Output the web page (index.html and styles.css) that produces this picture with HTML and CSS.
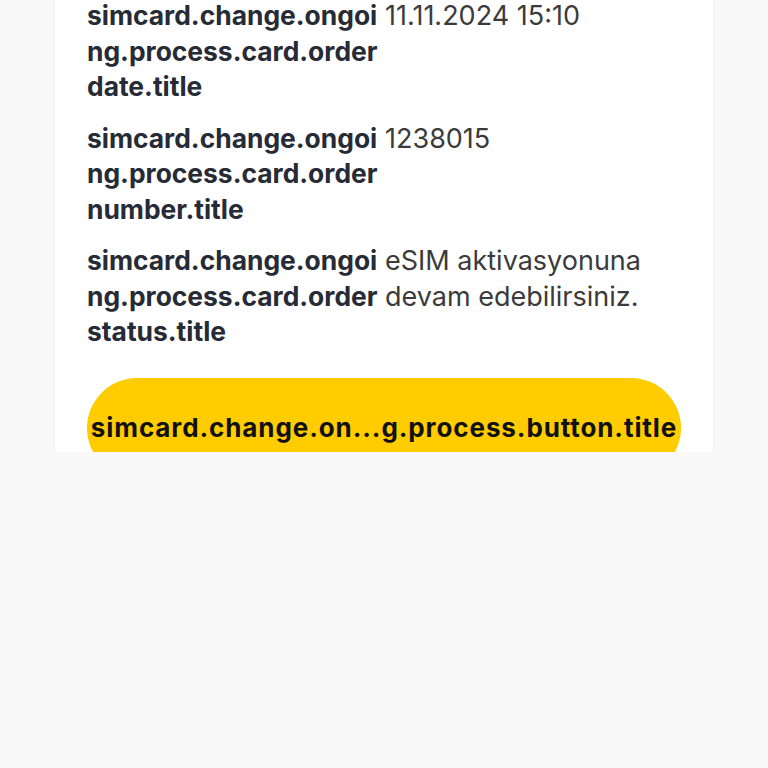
FILE: index.html
```html
<!DOCTYPE html>
<html lang="tr">
<head>
    <meta charset="UTF-8">
    <meta name="viewport" content="width=device-width, initial-scale=1.0">
    <title>SIM Kart Değişimi</title>
    <link rel="stylesheet" href="styles.css">
</head>
<body>

    <div class="screen">
        <div class="card">
            <div class="details">
                <div class="row">
                    <div class="label">simcard.change.ongoi<br>ng.process.card.order<br>date.title</div>
                    <div class="value">11.11.2024 15:10</div>
                </div>
                <div class="row">
                    <div class="label">simcard.change.ongoi<br>ng.process.card.order<br>number.title</div>
                    <div class="value">1238015</div>
                </div>
                <div class="row">
                    <div class="label">simcard.change.ongoi<br>ng.process.card.order<br>status.title</div>
                    <div class="value">eSIM aktivasyonuna devam edebilirsiniz.</div>
                </div>
            </div>

            <button class="main-btn">simcard.change.on...g.process.button.title</button>
        </div>
    </div>

</body>
</html>
```

FILE: styles.css
```css
body {
    font-family: Inter, "Open Sans", sans-serif;
    background-color: #f9f9f9;
    margin: 0;
}

.screen {
    height: 452px;
    overflow: hidden;
}

.card {
    margin: 0 55px;
    padding: 0 32px 40px;
    background-color: #fff;
    box-shadow: 0 0 4px rgba(0, 0, 0, 0.06);
}

.details {
    display: flex;
    flex-direction: column;
    gap: 16px;
    margin-top: -2px;
}

.row {
    display: grid;
    grid-template-columns: 290px 1fr;
    column-gap: 8px;
    line-height: 35.5px;
}

.label {
    font-size: 26.4px;
    font-weight: 700;
    color: #262b36;
    white-space: nowrap;
}

.value {
    font-size: 27px;
    color: #3b3b3b;
}

.main-btn {
    display: block;
    width: 100%;
    height: 100px;
    margin-top: 28px;
    padding: 0;
    border: none;
    border-radius: 50px;
    background-color: #ffcc00;
    color: #111;
    font-family: inherit;
    font-size: 26px;
    font-weight: 700;
    letter-spacing: 0.9px;
    white-space: nowrap;
    overflow: hidden;
    cursor: pointer;
}
```
